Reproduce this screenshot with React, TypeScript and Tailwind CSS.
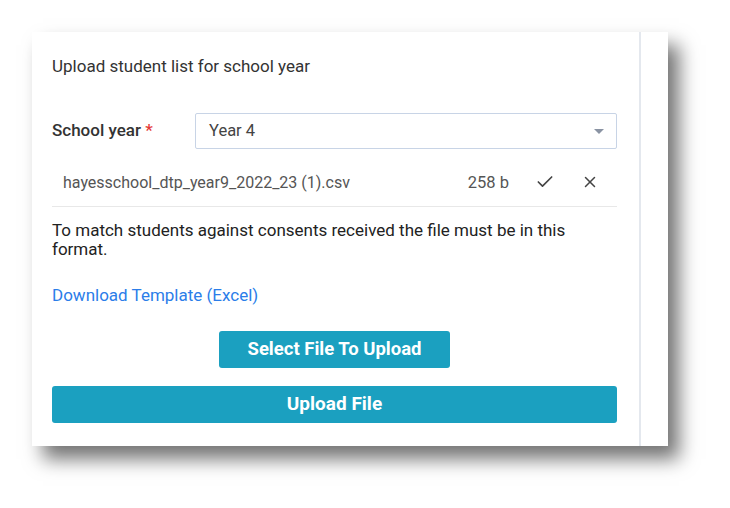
import { Check, X } from "lucide-react";

export default function App() {
  return (
    <div className="h-[508px] w-[730px] bg-white pt-[32px] pl-[32px] font-['Roboto',sans-serif]">
      <div className="flex h-[414px] w-[636px] bg-white shadow-[11px_13px_18px_rgba(0,0,0,0.55)]">
        <div className="flex w-[607px] flex-col pl-[20px] pr-[22px] pt-[23px]">
          <h2 className="text-[17px] leading-[22px] text-[#333]">Upload student list for school year</h2>

          <div className="mt-[36px] flex items-center">
            <label className="w-[143px] text-[17px] font-medium text-[#333]">
              School year <span className="text-[#e53935]">*</span>
            </label>
            <div className="flex h-[36px] flex-1 items-center justify-between rounded-[2px] border border-[#c8d4e6] pl-[13px] pr-[12px]">
              <span className="text-[16.5px] text-[#444]">Year 4</span>
              <svg width="10" height="5" viewBox="0 0 10 5" aria-hidden>
                <path d="M0 0h10L5 5z" fill="#8a93a3" />
              </svg>
            </div>
          </div>

          <div className="mt-[22px] flex h-[36px] items-start border-b border-[#e8e8e8] pl-[11px] pr-[18px]">
            <span className="flex-1 text-[16px] leading-[24px] text-[#555]">
              hayesschool_dtp_year9_2022_23 (1).csv
            </span>
            <span className="text-[16.5px] leading-[24px] text-[#555]">258 b</span>
            <Check className="ml-[26px] mt-[1px] h-[20px] w-[20px] text-[#444]" strokeWidth={2} />
            <X className="ml-[26px] mt-[2px] h-[18px] w-[18px] text-[#444]" strokeWidth={2} />
          </div>

          <p className="mt-[14px] text-[17px] leading-[19px] text-[#222]">
            To match students against consents received the file must be in this format.
          </p>

          <a className="mt-[26px] text-[17px] leading-[20px] text-[#2b7de9]" href="#">
            Download Template (Excel)
          </a>

          <div className="mt-[26px] flex justify-center">
            <button className="h-[37px] w-[231px] rounded-[3px] bg-[#1ba0c0] text-[18.5px] font-bold text-white">
              Select File To Upload
            </button>
          </div>

          <button className="mt-[18px] h-[37px] w-full rounded-[3px] bg-[#1ba0c0] text-[19px] font-bold text-white">
            Upload File
          </button>
        </div>
        <div className="w-[2px] bg-[#e4e8ee]" />
        <div className="flex-1" />
      </div>
    </div>
  );
}
